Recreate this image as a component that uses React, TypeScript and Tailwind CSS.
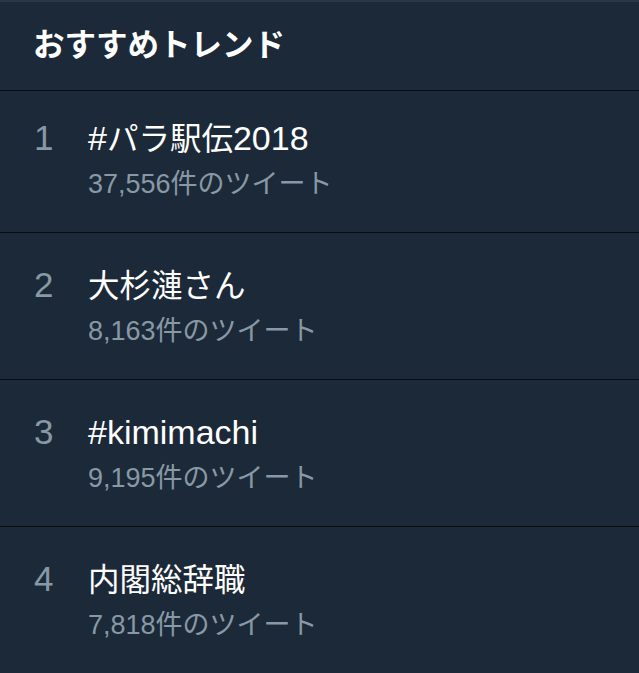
import React from 'react';

interface Trend {
  rank: number;
  name: string;
  count: string;
}

const trends: Trend[] = [
  { rank: 1, name: '#パラ駅伝2018', count: '37,556件のツイート' },
  { rank: 2, name: '大杉漣さん', count: '8,163件のツイート' },
  { rank: 3, name: '#kimimachi', count: '9,195件のツイート' },
  { rank: 4, name: '内閣総辞職', count: '7,818件のツイート' },
];

// CJK glyphs run a bit narrower than the latin ones in the original
const Title: React.FC<{ text: string }> = ({ text }) => {
  const parts = text.split(/([\u3000-\u9fff]+)/).filter(Boolean);
  return (
    <>
      {parts.map((p, i) =>
        /[\u3000-\u9fff]/.test(p) ? (
          <span key={i} className="text-[31.5px] leading-none">{p}</span>
        ) : (
          <span key={i}>{p}</span>
        )
      )}
    </>
  );
};

const TrendRow: React.FC<{ trend: Trend; first: boolean }> = ({ trend, first }) => (
  <div className={`flex border-t border-[#080d12] pl-[34px] pb-[32px] ${first ? 'pt-[27px]' : 'pt-[32px]'}`}>
    <div className="w-[54px] shrink-0 text-[35px] leading-[40px] text-[#8899a6]">{trend.rank}</div>
    <div className="flex flex-col">
      <div className="h-[40px] text-[34px] leading-[40px] text-white">
        <Title text={trend.name} />
      </div>
      <div className="mt-[10px] text-[27px] leading-[32px] text-[#8899a6]">{trend.count}</div>
    </div>
  </div>
);

export default function App() {
  return (
    <div className="w-[639px] h-[673px] overflow-hidden bg-[#1c2938] font-['Liberation_Sans','Noto_Sans_CJK_JP',sans-serif]">
      <div className="border-t-2 border-[#2a3645] pt-[23px] pb-[25px] pl-[33px]">
        <h2 className="text-[31.5px] leading-[40px] font-bold text-white">おすすめトレンド</h2>
      </div>
      {trends.map((t, i) => (
        <TrendRow key={t.rank} trend={t} first={i === 0} />
      ))}
    </div>
  );
}
